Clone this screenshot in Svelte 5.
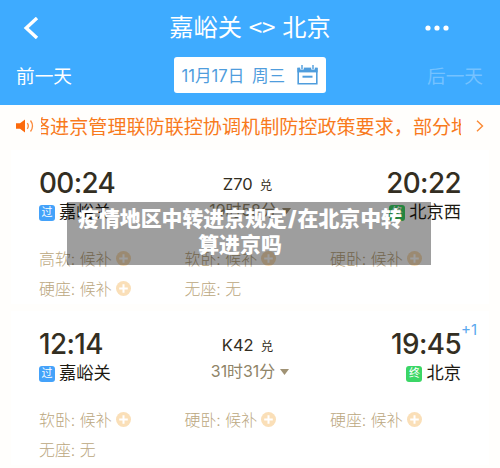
<script lang="ts">
  const notice = '络进京管理联防联控协调机制防控政策要求，部分地区';

  const trains = [
    {
      code: 'Z70',
      depart: '00:24',
      arrive: '20:22',
      days: '',
      duration: '19时58分',
      from: '嘉峪关',
      to: '北京西',
      seats: [
        {name: '高软', status: '候补'},
        {name: '软卧', status: '候补'},
        {name: '硬卧', status: '候补'},
        {name: '硬座', status: '候补'},
        {name: '无座', status: '无'},
      ],
    },
    {
      code: 'K42',
      depart: '12:14',
      arrive: '19:45',
      days: '+1',
      duration: '31时31分',
      from: '嘉峪关',
      to: '北京',
      seats: [
        {name: '软卧', status: '候补'},
        {name: '硬卧', status: '候补'},
        {name: '硬座', status: '候补'},
        {name: '无座', status: '无'},
      ],
    },
  ];
</script>

<main class="page">
  <header class="header">
    <div class="header__bar">
      <svg class="header__back" width="16" height="22" viewBox="0 0 16 22">
        <path d="M14 1 3.200 11 14 21" fill="none" stroke="#fff" stroke-width="3.400" />
      </svg>
      <h1 class="header__title">嘉峪关 <span class="header__swap">&lt;&gt;</span> 北京</h1>
      <svg class="header__more" width="24" height="6" viewBox="0 0 24 6">
        <circle cx="3" cy="3" r="2.600" fill="#fff" />
        <circle cx="12" cy="3" r="2.600" fill="#fff" />
        <circle cx="21" cy="3" r="2.600" fill="#fff" />
      </svg>
    </div>
    <div class="header__days">
      <span class="header__day">前一天</span>
      <div class="header__date">
        <span>11月17日 周三</span>
        <svg width="21" height="20" viewBox="0 0 21 20">
          <path d="M1.200 3v15.700h18.600V3" fill="none" stroke="#4f9ddd" stroke-width="1.600" />
          <path d="M.4 2.600h20.200v4.800H.4z" fill="#4f9ddd" />
          <path d="M5 0v4.500M16 0v4.500" stroke="#fff" stroke-width="3.600" />
          <path d="M5 0v4M16 0v4" stroke="#4f9ddd" stroke-width="1.400" />
          <path d="M5.500 11.700h10" stroke="#4f9ddd" stroke-width="2" />
        </svg>
      </div>
      <span class="header__day header__day_off">后一天</span>
    </div>
  </header>

  <div class="notice">
    <svg class="notice__icon" width="19" height="14" viewBox="0 0 19 14">
      <path d="M0 4.200h4L9 .5v13L4 9.800H0z" fill="#fc6a0c" />
      <path d="M11.300 4.200q2 2.800 0 5.600M14.500 1.500q4 5.500 0 11" fill="none" stroke="#fc8a3c" stroke-width="1.300" />
    </svg>
    <div class="notice__text"><span>{notice}</span></div>
    <svg class="notice__arrow" width="8" height="12" viewBox="0 0 8 12">
      <path d="M1 .8 6.500 6 1 11.200" fill="none" stroke="#fb8a35" stroke-width="1.400" />
    </svg>
  </div>

  {#each trains as train}
    <section class="train">
      <div class="train__info">
        <div class="train__side">
          <div class="train__time">{train.depart}</div>
          <div class="train__station"><i class="badge">过</i>{train.from}</div>
        </div>
        <div class="train__middle">
          <div class="train__code">{train.code}<span class="train__tag">兑</span></div>
          <div class="train__duration">
            {train.duration}
            <svg width="9" height="6" viewBox="0 0 9 6"><path d="M0 0h9L4.500 6z" fill="#a09274" /></svg>
          </div>
        </div>
        <div class="train__side train__side_right">
          <div class="train__time">
            {train.arrive}
            {#if train.days}<sup class="train__days">{train.days}</sup>{/if}
          </div>
          <div class="train__station"><i class="badge badge_end">终</i>{train.to}</div>
        </div>
      </div>
      <div class="train__seats">
        {#each train.seats as seat}
          <div class="seat">
            <span>{seat.name}: {seat.status}</span>
            {#if seat.status === '候补'}
              <svg width="15" height="15" viewBox="0 0 15 15">
                <circle cx="7.500" cy="7.500" r="7.500" fill="#fadfb8" />
                <path d="M7.500 3.200v8.600M3.200 7.500h8.600" stroke="#fff" stroke-width="2" />
              </svg>
            {/if}
          </div>
        {/each}
      </div>
    </section>
  {/each}

  <div class="caption">疫情地区中转进京规定<span class="caption__slash">/</span>在北京中转算进京吗</div>
</main>

<style>
  :global(body) {
    background: #fffefc;
  }

  .page {
    position: relative;
    width: 500px;
    height: 468px;
    overflow: hidden;
    font-family: Inter, "Noto Sans CJK SC", sans-serif;
    color: #332e22;
  }

  .header {
    box-sizing: border-box;
    height: 105px;
    background: #3eabff;
    color: #fff;
  }

  .header__bar {
    display: grid;
    grid-template-columns: 1fr auto 1fr;
    align-items: center;
    height: 54px;
    padding: 0 51px 0 23px;
  }

  .header__title {
    margin: -1px 0 0 28px;
    font-size: 24.200px;
    font-weight: 400;
    line-height: 54px;
    white-space: nowrap;
  }

  .header__swap {
    font-family: "Noto Sans CJK SC", sans-serif;
  }

  .header__more {
    justify-self: end;
  }

  .header__days {
    display: flex;
    justify-content: space-between;
    align-items: center;
    height: 42px;
    padding: 0 17px 0 16px;
    font-size: 18.700px;
  }

  .header__day {
    margin-top: -2px;
  }

  .header__day_off {
    color: #75c2ff;
  }

  .header__date {
    box-sizing: border-box;
    display: flex;
    justify-content: space-between;
    align-items: center;
    width: 152px;
    height: 36px;
    padding: 0 8px;
    border-radius: 3px;
    background: #fff;
    color: #4f9ddd;
    font-size: 16.600px;
    white-space: nowrap;
    word-spacing: 3px;
  }

  .notice {
    display: flex;
    align-items: center;
    height: 43px;
    padding: 0 16px;
    color: #f87a1c;
  }

  .notice__text {
    display: flex;
    width: 421px;
    margin: -2px 15px 0 6px;
    overflow: hidden;
    font-size: 19.100px;
    white-space: nowrap;
  }

  .notice__text span {
    margin-left: -10px;
  }

  .notice__icon,
  .notice__arrow {
    flex: none;
    margin-top: -2px;
  }

  .train {
    box-sizing: border-box;
    height: 154px;
    margin: 2px 11px 7px;
    padding: 16px 28px 0;
    background: #fff;
  }

  .train__info {
    display: grid;
    grid-template-columns: 1fr auto 1fr;
    height: 77px;
  }

  .train__side_right {
    display: flex;
    flex-direction: column;
    align-items: flex-end;
  }

  .train__time {
    position: relative;
    height: 33px;
    font-size: 27.800px;
    font-weight: 450;
    letter-spacing: -0.600px;
    line-height: 34px;
  }

  .train__days {
    position: absolute;
    left: 100%;
    top: -6px;
    color: #5ba8ee;
    font-size: 15px;
    font-weight: 400;
    letter-spacing: 0;
    line-height: 18px;
  }

  .train__station {
    display: flex;
    align-items: center;
    height: 26px;
    color: #1d1a12;
    font-size: 17.300px;
    line-height: 20px;
  }

  .badge {
    width: 16px;
    height: 16px;
    margin: 1px 4px 0 0;
    border-radius: 3px;
    background: #44a2fa;
    color: #fff;
    font-size: 11px;
    font-style: normal;
    line-height: 15px;
    text-align: center;
  }

  .badge_end {
    background: #3bd666;
  }

  .train__middle {
    text-align: center;
  }

  .train__code {
    height: 32px;
    padding-right: 5px;
    font-size: 16.500px;
    line-height: 36px;
  }

  .train__tag {
    margin-left: 7px;
    font-size: 12.500px;
  }

  .train__duration {
    display: flex;
    align-items: center;
    gap: 5px;
    height: 22px;
    color: #8f8468;
    font-size: 15.900px;
  }

  .train__duration svg {
    margin-top: 4px;
  }

  .train__seats {
    display: grid;
    grid-template-columns: repeat(3, 145.500px);
    grid-auto-rows: 30px;
  }

  .seat {
    display: flex;
    align-items: center;
    gap: 4px;
    color: #bba780;
    font-size: 15.900px;
    font-weight: 300;
  }

  .seat svg {
    margin-top: 1px;
  }

  .caption {
    position: absolute;
    left: 67px;
    top: 202px;
    box-sizing: border-box;
    width: 364px;
    height: 63px;
    padding: 4px 28px 0 10px;
    background: rgba(0, 0, 0, 0.380);
    color: #fff;
    font-size: 20.900px;
    font-weight: 900;
    line-height: 26px;
    text-align: center;
  }

  .caption__slash {
    margin: 0 1px;
  }
</style>
